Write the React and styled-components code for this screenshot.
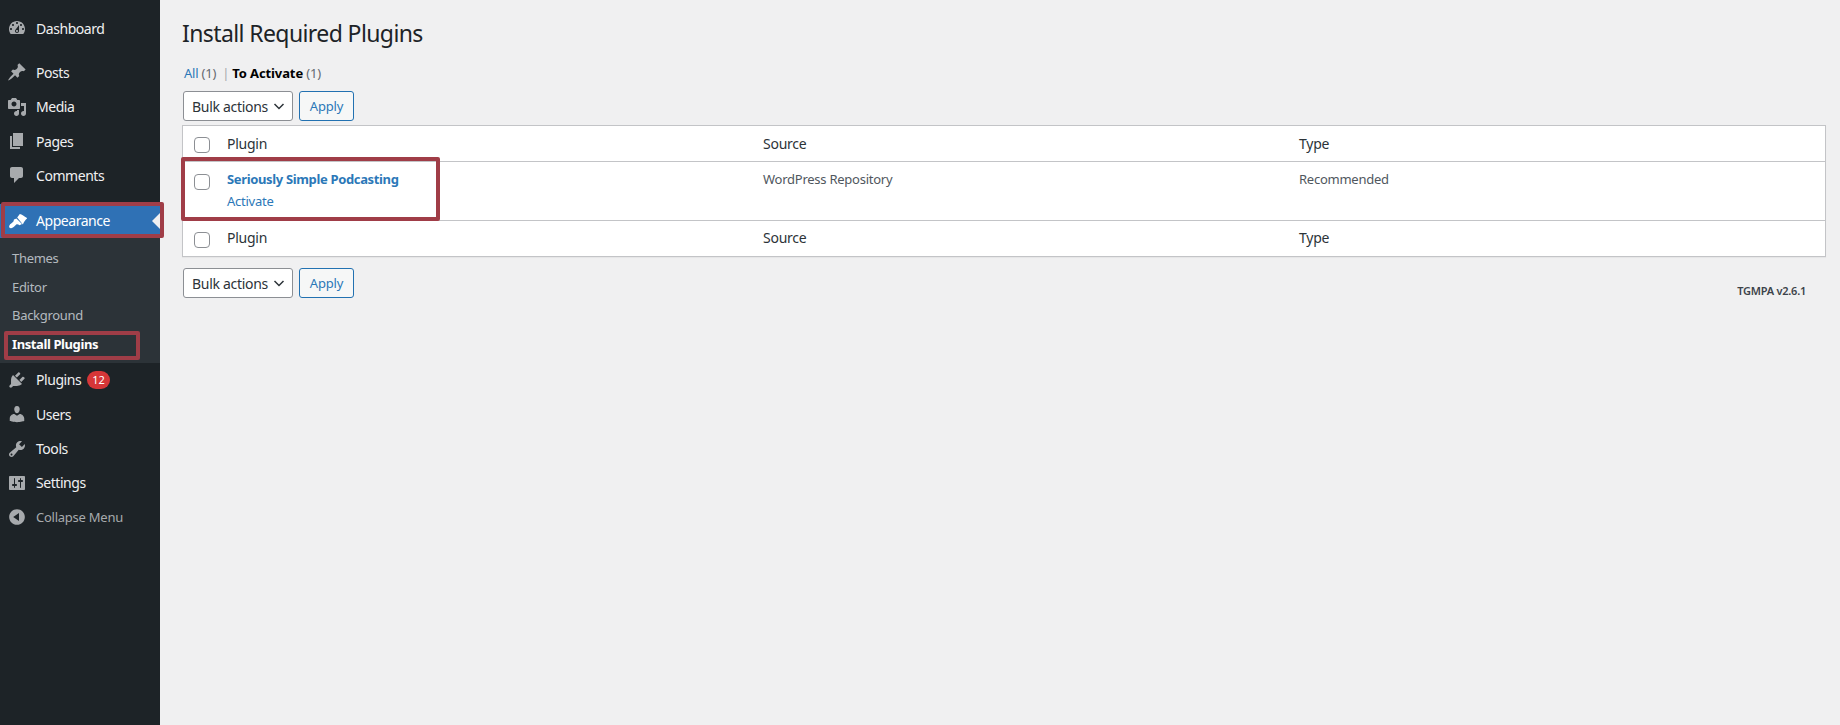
import React from "react";
import styled, { createGlobalStyle } from "styled-components";

const GlobalStyle = createGlobalStyle`
  html, body { margin: 0; padding: 0; background: #f0f0f1; }
  body {
    font-family: "Noto Sans", "Open Sans", sans-serif;
    font-size: 13px;
    color: #3c434a;
  }
  a { text-decoration: none; }
`;

const Page = styled.div`
  display: flex;
  min-height: 725px;
`;

const Sidebar = styled.nav`
  width: 160px;
  flex: none;
  background: #1d2327;
  padding: 11px 0;
  box-sizing: border-box;
`;

const MenuItem = styled.a`
  position: relative;
  display: flex;
  align-items: center;
  height: 34.33px;
  margin-top: ${(p) => p.$gap || 0}px;
  background: ${(p) => (p.$current ? "#2f71b5" : "transparent")};
  color: ${(p) => (p.$muted ? "#a7aaad" : p.$current ? "#fff" : "#f0f0f1")};
  font-size: ${(p) => (p.$muted ? "13px" : "14px")};
  letter-spacing: ${(p) => (p.$muted ? "-0.25px" : "-0.45px")};
  svg {
    flex: none;
    width: 20px;
    height: 20px;
    margin: 0 9px 0 7px;
    fill: ${(p) => (p.$current ? "#fff" : "#a7aaad")};
  }
`;

const CurrentArrow = styled.span`
  position: absolute;
  right: 0;
  top: 9px;
  border: 8px solid transparent;
  border-right-color: #f0f0f1;
  border-left-width: 0;
`;

const Badge = styled.span`
  display: inline-block;
  margin-left: 6px;
  height: 18px;
  padding: 0 5px;
  box-sizing: border-box;
  border-radius: 9px;
  background: #d63638;
  color: #fff;
  font-size: 11px;
  letter-spacing: 0;
  line-height: 18px;
  text-align: center;
`;

const SubMenu = styled.div`
  background: #2c3338;
  padding: 6px 0 4px;
`;

const SubItem = styled.a`
  position: relative;
  display: block;
  height: 28.7px;
  line-height: 28.7px;
  padding-left: 12px;
  font-size: 13px;
  letter-spacing: ${(p) => (p.$current ? "-0.4px" : "-0.3px")};
  color: ${(p) => (p.$current ? "#fff" : "rgba(240,246,252,.7)")};
  font-weight: ${(p) => (p.$current ? 700 : 400)};
`;

const Callout = styled.span`
  position: absolute;
  box-sizing: border-box;
  border: 4px solid #a03d47;
  border-radius: 2px;
  pointer-events: none;
  z-index: 2;
`;

const AppearanceCallout = styled(Callout)`
  left: 1px;
  top: -2px;
  width: 163px;
  height: 36px;
`;

const InstallCallout = styled(Callout)`
  left: 4px;
  top: 1px;
  width: 136px;
  height: 29px;
`;

const RowCallout = styled(Callout)`
  left: -2px;
  top: -5px;
  width: 259px;
  height: 64px;
`;

const Main = styled.main`
  flex: 1;
  min-width: 0;
  padding: 0 14px 0 22px;
`;

const Title = styled.h1`
  margin: 0;
  padding: 19px 0 0;
  height: 47px;
  box-sizing: border-box;
  font-size: 23px;
  font-weight: 400;
  line-height: 29px;
  color: #1d2327;
  letter-spacing: -0.6px;
`;

const Views = styled.ul`
  list-style: none;
  display: flex;
  align-items: center;
  margin: 16px 0 0 2px;
  padding: 0;
  height: 20px;
  font-size: 13px;
  letter-spacing: -0.2px;
  color: #646970;
`;

const Link = styled.a`
  color: #2b78b8;
`;

const Current = styled.b`
  color: #000;
  font-weight: 700;
  letter-spacing: -0.1px;
`;

const Divider = styled.span`
  margin: 0 3px 0 6px;
  color: #a7aaad;
`;

const Actions = styled.div`
  display: flex;
  gap: 6px;
  margin: ${(p) => p.$top}px 0 ${(p) => p.$bottom}px;
  padding-left: 1px;
`;

const BulkSelect = styled.div`
  display: flex;
  align-items: center;
  justify-content: space-between;
  box-sizing: border-box;
  width: 110px;
  height: 30px;
  padding: 0 7px 0 8px;
  background: #fff;
  border: 1px solid #8c8f94;
  border-radius: 3px;
  font-size: 14px;
  letter-spacing: -0.3px;
  color: #2c3338;
  svg { width: 12px; height: 12px; flex: none; }
`;

const ApplyButton = styled.button`
  box-sizing: border-box;
  width: 55px;
  height: 30px;
  padding: 0;
  background: #f6f7f7;
  border: 1px solid #2271b1;
  border-radius: 3px;
  color: #2b78b8;
  font: inherit;
  font-size: 13px;
  letter-spacing: -0.2px;
`;

const Table = styled.table`
  width: 100%;
  table-layout: fixed;
  border-collapse: separate;
  border-spacing: 0;
  background: #fff;
  border: 1px solid #c3c4c7;
  box-shadow: 0 1px 1px rgba(0,0,0,.04);
`;

const CheckCol = styled.col`
  width: 34px;
`;

const HeadCell = styled.th`
  box-sizing: border-box;
  height: 36px;
  padding: 0 10px ${(p) => (p.$foot ? 2 : 1)}px;
  font-size: 14px;
  font-weight: 400;
  letter-spacing: -0.25px;
  text-align: left;
  color: #2c3338;
  border-${(p) => (p.$foot ? "top" : "bottom")}: 1px solid #c3c4c7;
  vertical-align: middle;
`;

const Cell = styled.td`
  position: relative;
  height: 58px;
  padding: 7px 10px 0;
  box-sizing: border-box;
  font-size: 13px;
  letter-spacing: -0.25px;
  color: #50575e;
  vertical-align: top;
`;

const CheckCell = styled(Cell)`
  padding: 12px 0 0 11px;
`;

const HeadCheckCell = styled(HeadCell)`
  padding: 3px 0 0 11px;
`;

const Checkbox = styled.span`
  display: block;
  box-sizing: border-box;
  width: 16px;
  height: 16px;
  background: #fff;
  border: 1px solid #8c8f94;
  border-radius: 4px;
`;

const PluginName = styled.a`
  display: block;
  color: #2b78b8;
  font-weight: 700;
  line-height: 20px;
  letter-spacing: -0.35px;
`;

const RowAction = styled.a`
  display: block;
  margin-top: 2px;
  color: #2b78b8;
  line-height: 20px;
`;

const PlainText = styled.div`
  line-height: 20px;
`;

const Version = styled.p`
  margin: 0;
  padding: 26px 20px 0 0;
  text-align: right;
  font-size: 11px;
  font-weight: 600;
  color: #3c434a;
  letter-spacing: -0.25px;
`;

const Footer = styled.div`
  display: flex;
  justify-content: space-between;
  align-items: flex-start;
`;

const icons = {
  dashboard: "M3.76 16h12.48c1.1-1.37 1.76-3.11 1.76-5 0-4.42-3.58-8-8-8s-8 3.58-8 8c0 1.89.66 3.63 1.76 5zM10 4c.55 0 1 .45 1 1s-.45 1-1 1-1-.45-1-1 .45-1 1-1zM6 6c.55 0 1 .45 1 1s-.45 1-1 1-1-.45-1-1 .45-1 1-1zm8 0c.55 0 1 .45 1 1s-.45 1-1 1-1-.45-1-1 .45-1 1-1zm-5.37 5.55L12 7v6c0 1.1-.9 2-2 2s-2-.9-2-2c0-.57.24-1.08.63-1.45zM4 10c.55 0 1 .45 1 1s-.45 1-1 1-1-.45-1-1 .45-1 1-1zm12 0c.55 0 1 .45 1 1s-.45 1-1 1-1-.45-1-1 .45-1 1-1zm-5 3c0-.55-.45-1-1-1s-1 .45-1 1 .45 1 1 1 1-.45 1-1z",
  posts: "M10.44 3.02l1.82-1.82 6.36 6.35-1.83 1.82c-1.05-.68-2.48-.57-3.41.36l-.75.75c-.92.93-1.04 2.35-.35 3.41l-1.83 1.82-2.41-2.41-2.8 2.79c-.42.42-3.38 2.71-3.8 2.29s1.86-3.39 2.28-3.81l2.79-2.79L4.1 9.36l1.83-1.82c1.05.69 2.48.57 3.4-.36l.75-.75c.93-.92 1.05-2.35.36-3.41z",
  media: "M13 11V4c0-.55-.45-1-1-1h-1.67L9 1H5L3.67 3H2c-.55 0-1 .45-1 1v7c0 .55.45 1 1 1h10c.55 0 1-.45 1-1zM7 4.5c1.38 0 2.5 1.12 2.5 2.5S8.38 9.5 7 9.5 4.5 8.38 4.5 7 5.62 4.5 7 4.5zM14 6h5v10.5c0 1.38-1.12 2.5-2.5 2.5S14 17.88 14 16.5s1.12-2.5 2.5-2.5c.17 0 .34.02.5.05V9h-3V6zm-4 8.05V13h2v3.5c0 1.38-1.12 2.5-2.5 2.5S7 17.88 7 16.5 8.12 14 9.5 14c.17 0 .34.02.5.05z",
  pages: "M6 15V2h10v13H6zm-1 1h8v2H3V5h2v11z",
  comments: "M5 2h9c1.1 0 2 .9 2 2v7c0 1.1-.9 2-2 2h-2l-5 5v-5H5c-1.1 0-2-.9-2-2V4c0-1.1.9-2 2-2z",
  appearance: "M10.2 6.6L12.8 3c2.2.2 4.7 3 7.7 4.2-2 1.4-3.7 3.8-4.6 6.4zM9.4 7.4L15 13l-2.4 1.3c-1.2-.9-2.4-1.5-3.3-.9-1.5 1.2-2.3 3.1-5.1 3.8-1.6.3-2.4-1.2-1.9-2.4.9-2.2 2.9-2.6 4.1-4.2.6-1 .2-1.6.6-2.1z",
  plugins: "M13.11 4.36L9.87 7.6 8 5.73l3.24-3.24c.35-.34 1.05-.2 1.56.32.52.51.66 1.21.31 1.55zm-8 1.77l.91-1.12 9.01 9.01-1.19.84c-.71.71-2.63 1.16-3.82 1.16H6.14L4.9 17.26c-.59.59-1.54.59-2.12 0-.59-.58-.59-1.53 0-2.12l1.24-1.24v-3.88c0-1.13.4-3.19 1.09-3.89zm7.26 3.97l3.24-3.24c.34-.35 1.04-.21 1.55.31.52.51.66 1.21.31 1.55l-3.24 3.25z",
  users: "M10 9.25c-2.27 0-2.73-3.44-2.73-3.44C7 4.02 7.82 2 9.97 2c2.16 0 2.98 2.02 2.71 3.81 0 0-.41 3.44-2.68 3.44zm0 2.57L12.72 10c2.39 0 4.52 2.33 4.52 4.53v2.49s-3.65 1.13-7.24 1.13c-3.65 0-7.24-1.13-7.24-1.13v-2.49c0-2.25 1.94-4.48 4.47-4.48z",
  tools: "M16.68 9.77c-1.34 1.34-3.3 1.67-4.95.99l-5.41 6.52c-.99.99-2.59.99-3.58 0s-.99-2.59 0-3.57l6.52-5.42c-.68-1.65-.35-3.61.99-4.95 1.28-1.28 3.12-1.62 4.72-1.06l-2.89 2.89 2.82 2.82 2.86-2.87c.53 1.58.18 3.39-1.08 4.65zM3.81 16.21c.4.39 1.04.39 1.43 0 .4-.4.4-1.04 0-1.43-.39-.4-1.03-.4-1.43 0-.39.39-.39 1.03 0 1.43z",
  settings: "M18 16V4c0-.55-.45-1-1-1H3c-.55 0-1 .45-1 1v12c0 .55.45 1 1 1h14c.55 0 1-.45 1-1zM8 11h1c.55 0 1 .45 1 1s-.45 1-1 1H8v1.5c0 .28-.22.5-.5.5s-.5-.22-.5-.5V13H6c-.55 0-1-.45-1-1s.45-1 1-1h1V5.5c0-.28.22-.5.5-.5s.5.22.5.5V11zm5-2h-1c-.55 0-1-.45-1-1s.45-1 1-1h1V5.5c0-.28.22-.5.5-.5s.5.22.5.5V7h1c.55 0 1 .45 1 1s-.45 1-1 1h-1v5.5c0 .28-.22.5-.5.5s-.5-.22-.5-.5V9z",
  collapse: "M10 2.16c4.33 0 7.84 3.51 7.84 7.84s-3.51 7.84-7.84 7.84S2.16 14.33 2.16 10 5.71 2.16 10 2.16zm2 11.72V6.12L6.18 9.97z",
};

const Icon = ({ name }) => (
  <svg viewBox="0 0 20 20" fillRule="evenodd">
    <path d={icons[name]} />
  </svg>
);

const Chevron = () => (
  <svg viewBox="0 0 12 12" fill="none" stroke="#2c3338" strokeWidth="1.5">
    <path d="M1.5 4l4.5 4.5L10.5 4" />
  </svg>
);

const BulkActions = ({ top, bottom }) => (
  <Actions $top={top} $bottom={bottom}>
    <BulkSelect>
      Bulk actions
      <Chevron />
    </BulkSelect>
    <ApplyButton>Apply</ApplyButton>
  </Actions>
);

const App = () => (
  <Page>
    <GlobalStyle />
    <Sidebar>
      <MenuItem><Icon name="dashboard" />Dashboard</MenuItem>
      <MenuItem $gap={10}><Icon name="posts" />Posts</MenuItem>
      <MenuItem><Icon name="media" />Media</MenuItem>
      <MenuItem><Icon name="pages" />Pages</MenuItem>
      <MenuItem><Icon name="comments" />Comments</MenuItem>
      <MenuItem $gap={11} $current>
        <Icon name="appearance" />Appearance
        <CurrentArrow />
        <AppearanceCallout />
      </MenuItem>
      <SubMenu>
        <SubItem>Themes</SubItem>
        <SubItem>Editor</SubItem>
        <SubItem>Background</SubItem>
        <SubItem $current>
          Install Plugins
          <InstallCallout />
        </SubItem>
      </SubMenu>
      <MenuItem><Icon name="plugins" />Plugins<Badge>12</Badge></MenuItem>
      <MenuItem><Icon name="users" />Users</MenuItem>
      <MenuItem><Icon name="tools" />Tools</MenuItem>
      <MenuItem><Icon name="settings" />Settings</MenuItem>
      <MenuItem $muted><Icon name="collapse" />Collapse Menu</MenuItem>
    </Sidebar>
    <Main>
      <Title>Install Required Plugins</Title>
      <Views>
        <li><Link>All</Link> (1)</li>
        <Divider>|</Divider>
        <li><Current>To Activate</Current> (1)</li>
      </Views>
      <BulkActions top={8} bottom={4} />
      <Table>
        <colgroup>
          <CheckCol />
          <col />
          <col />
          <col />
        </colgroup>
        <thead>
          <tr>
            <HeadCheckCell><Checkbox /></HeadCheckCell>
            <HeadCell>Plugin</HeadCell>
            <HeadCell>Source</HeadCell>
            <HeadCell>Type</HeadCell>
          </tr>
        </thead>
        <tbody>
          <tr>
            <CheckCell><RowCallout /><Checkbox /></CheckCell>
            <Cell>
              <PluginName>Seriously Simple Podcasting</PluginName>
              <RowAction>Activate</RowAction>
            </Cell>
            <Cell><PlainText>WordPress Repository</PlainText></Cell>
            <Cell><PlainText>Recommended</PlainText></Cell>
          </tr>
        </tbody>
        <tfoot>
          <tr>
            <HeadCheckCell $foot><Checkbox /></HeadCheckCell>
            <HeadCell $foot>Plugin</HeadCell>
            <HeadCell $foot>Source</HeadCell>
            <HeadCell $foot>Type</HeadCell>
          </tr>
        </tfoot>
      </Table>
      <Footer>
        <BulkActions top={11} bottom={0} />
        <Version>TGMPA v2.6.1</Version>
      </Footer>
    </Main>
  </Page>
);

export default App;
